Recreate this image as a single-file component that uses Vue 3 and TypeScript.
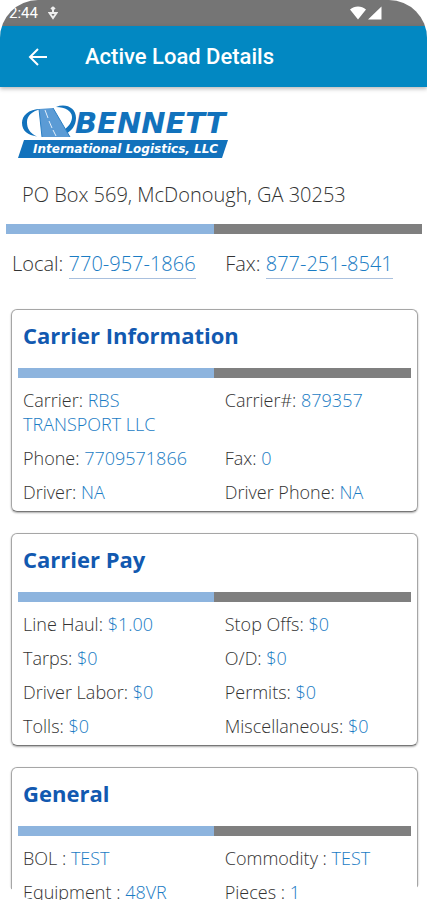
<script setup lang="ts">
interface Field {
  label: string
  value: string
}

interface Section {
  title: string
  fields: Field[]
}

const sections: Section[] = [
  {
    title: 'Carrier Information',
    fields: [
      { label: 'Carrier:', value: 'RBS TRANSPORT LLC' },
      { label: 'Carrier#:', value: '879357' },
      { label: 'Phone:', value: '7709571866' },
      { label: 'Fax:', value: '0' },
      { label: 'Driver:', value: 'NA' },
      { label: 'Driver Phone:', value: 'NA' },
    ],
  },
  {
    title: 'Carrier Pay',
    fields: [
      { label: 'Line Haul:', value: '$1.00' },
      { label: 'Stop Offs:', value: '$0' },
      { label: 'Tarps:', value: '$0' },
      { label: 'O/D:', value: '$0' },
      { label: 'Driver Labor:', value: '$0' },
      { label: 'Permits:', value: '$0' },
      { label: 'Tolls:', value: '$0' },
      { label: 'Miscellaneous:', value: '$0' },
    ],
  },
  {
    title: 'General',
    fields: [
      { label: 'BOL :', value: 'TEST' },
      { label: 'Commodity :', value: 'TEST' },
      { label: 'Equipment :', value: '48VR' },
      { label: 'Pieces :', value: '1' },
    ],
  },
]
</script>

<template>
  <div class="screen">
    <div class="status">
      <span class="clock">2:44</span>
      <svg class="usb" viewBox="0 0 10 14" aria-hidden="true">
        <path d="M5 1.500v6M3 3l2-1.500L7 3M1.500 7h7L5 12z" />
      </svg>
      <svg class="signal" viewBox="0 0 34 16" aria-hidden="true">
        <path d="M1 4.500C5.500.500 12.500.500 17 4.500L9 14.500zM32.500 1.500v13H19z" />
      </svg>
    </div>

    <header class="bar">
      <button class="back" type="button" aria-label="Back">
        <svg viewBox="0 0 20 20" aria-hidden="true">
          <path d="M19 10H2M10 2L2 10l8 8" />
        </svg>
      </button>
      <h1>Active Load Details</h1>
    </header>

    <main>
      <svg class="logo" viewBox="0 0 212 54" role="img" aria-label="Bennett International Logistics, LLC">
        <path class="deep" d="M23 4C10 4 4 11 4 18c0 8 6 12 15 13.500C12 28 9 24 9 17 9 11 14 6 23 4z" />
        <path class="deep" d="M38 2C48-2 58 3 58 13c0 8-5 13-10 16l-2-4c5-4 8-8 8-13C54 6 47 2 38 2z" />
        <path class="road" d="M21 4l14-1 17 29H24z" />
        <path class="lane" d="M27 5l3 8M31 16l3 7M35 25l3 6" />
        <path class="edge" d="M21 4l3 28M35 3l17 29" />
        <text class="brand" x="57" y="28">BENNETT</text>
        <path class="deep" d="M6 35h204l-6 18H0z" />
        <text class="tagline" x="15" y="48">International Logistics, LLC</text>
      </svg>

      <p class="address">PO Box 569, McDonough, GA 30253</p>
      <div class="divider"></div>

      <div class="contacts">
        <p>Local: <a href="tel:7709571866">770-957-1866</a></p>
        <p>Fax: <a href="tel:8772518541">877-251-8541</a></p>
      </div>

      <section v-for="section in sections" :key="section.title" class="card">
        <h2>{{ section.title }}</h2>
        <div class="divider"></div>
        <dl>
          <div v-for="field in section.fields" :key="field.label" class="field">
            <dt>{{ field.label }}</dt>
            {{ ' ' }}
            <dd>{{ field.value }}</dd>
          </div>
        </dl>
      </section>
    </main>
  </div>
</template>

<style>
body {
  margin: 0;
  background: #fff;
}
</style>

<style scoped>
.screen {
  height: 100vh;
  overflow: hidden;
  border-radius: 38px;
  background: #fff;
  color: #333;
  font-family: "Open Sans", "Noto Sans", sans-serif;
  font-weight: 300;
}

.status {
  display: flex;
  align-items: center;
  height: 26px;
  padding: 0 44px 0 9px;
  background: #757575;
  color: #fff;
  font: 400 15px/26px Roboto, sans-serif;
}

.usb {
  width: 10px;
  height: 14px;
  margin-left: 10px;
}

.usb path {
  fill: none;
  stroke: #eee;
  stroke-width: 2;
}

.signal {
  width: 34px;
  height: 16px;
  margin-left: auto;
  fill: #fff;
}

.bar {
  display: flex;
  align-items: center;
  gap: 36px;
  height: 61px;
  padding: 0 27px;
  background: #0288c2;
  box-shadow: 0 2px 4px #0004;
  color: #fff;
}

.back {
  display: flex;
  padding: 0;
  border: 0;
  background: none;
}

.back svg {
  width: 22px;
  height: 20px;
  fill: none;
  stroke: #fff;
  stroke-width: 2;
}

h1 {
  margin: 0;
  font: 500 22px/28px Roboto, sans-serif;
}

main {
  padding: 18px 5px 0 6px;
}

.logo {
  display: block;
  width: 212px;
  height: 54px;
  margin-left: 12px;
}

.deep {
  fill: #1272bc;
}

.road {
  fill: #5b9bd5;
}

.lane,
.edge {
  fill: none;
  stroke: #e4effa;
  stroke-width: 1;
}

.edge {
  stroke: #2a7fc4;
}

.brand {
  fill: #1272bc;
  font: italic 700 29px "DejaVu Sans", sans-serif;
}

.tagline {
  fill: #fff;
  font: italic 700 12px "DejaVu Sans", sans-serif;
}

.address {
  margin: 22px 0 16px 16px;
  font-size: 20px;
  line-height: 27px;
}

.divider {
  height: 10px;
  background: linear-gradient(to right, #8db4de 50%, #7f7f7f 50%);
}

.contacts {
  display: grid;
  grid-template-columns: 13fr 12fr;
  padding: 15px 0 30px 6px;
  font-size: 20px;
  line-height: 30px;
}

.contacts p {
  margin: 0;
}

a {
  display: inline-block;
  border-bottom: 1px solid #a9c0de;
  color: #1a7cc4;
  line-height: 28px;
  text-decoration: none;
}

.card {
  margin: 0 4px 21px 5px;
  padding: 0 6px 7px;
  border: 1px solid #a6a6a6;
  border-bottom-color: #777;
  border-radius: 6px;
  box-shadow: 0 1px 2px #0005;
}

h2 {
  margin: 0;
  padding: 9px 5px 17px;
  color: #1259b0;
  font-size: 22px;
  font-weight: 700;
  line-height: 32px;
}

dl {
  display: grid;
  grid-template-columns: 13fr 12fr;
  gap: 10px 0;
  margin: 0;
  padding: 10px 0 0 5px;
  font-size: 18px;
  line-height: 24px;
}

.field {
  padding-right: 20px;
}

dt,
dd {
  display: inline;
  margin: 0;
}

dd {
  color: #1a7cc4;
}
</style>
